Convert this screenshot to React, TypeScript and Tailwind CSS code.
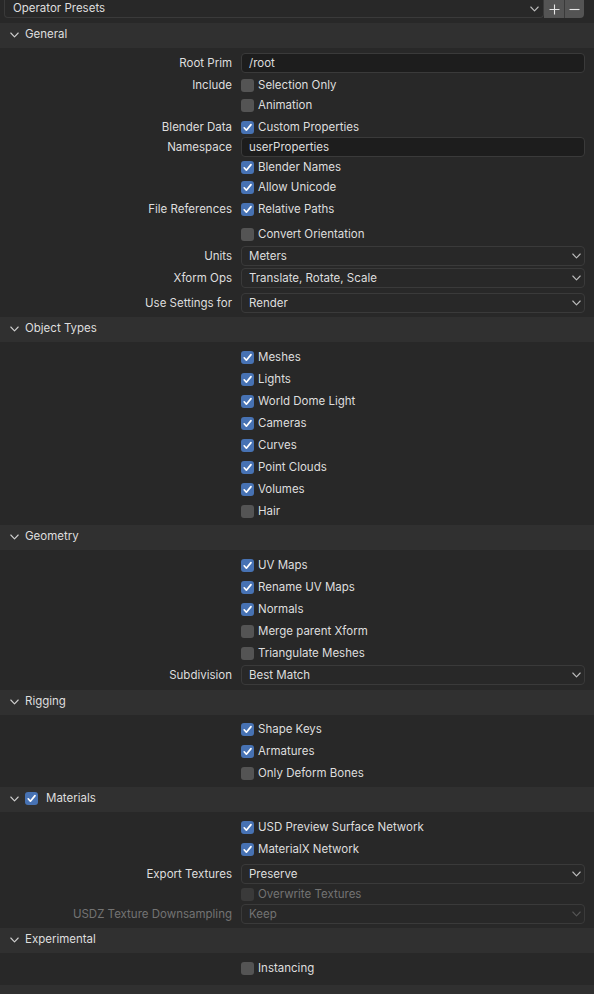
import React from "react";

const font = { fontFamily: "Inter, 'Noto Sans', sans-serif" };

function Check({ on = false, disabled = false }: { on?: boolean; disabled?: boolean }) {
  const bg = on ? "bg-[#4772b3]" : disabled ? "bg-[#3a3a3a]" : "bg-[#545454]";
  return (
    <div className={`w-[13px] h-[13px] rounded-[3px] shrink-0 flex items-center justify-center ${bg}`}>
      {on && (
        <svg width="13" height="13" viewBox="0 0 13 13">
          <polyline points="3.2,6.8 5.4,9.2 10,3.6" fill="none" stroke="white" strokeWidth="1.7" strokeLinecap="round" strokeLinejoin="round" />
        </svg>
      )}
    </div>
  );
}

function Chevron({ className = "" }: { className?: string }) {
  return (
    <svg width="9" height="6" viewBox="0 0 9 6" className={className}>
      <polyline points="0.8,1 4.5,4.8 8.2,1" fill="none" stroke="currentColor" strokeWidth="1.1" strokeLinecap="round" strokeLinejoin="round" />
    </svg>
  );
}

function Header({ title, check }: { title: string; check?: boolean }) {
  return (
    <div className="h-[25px] bg-[#303030] flex items-center pb-[2px] text-[#dedede] text-[11.5px]">
      <Chevron className="ml-[10px] text-[#cfcfcf]" />
      {check ? (
        <>
          <div className="ml-[6px]">
            <Check on />
          </div>
          <span className="ml-[8px] pt-px">{title}</span>
        </>
      ) : (
        <span className="ml-[6px] pt-px">{title}</span>
      )}
    </div>
  );
}

function Row({ label, disabled, mt = "", children }: { label?: string; disabled?: boolean; mt?: string; children: React.ReactNode }) {
  return (
    <div className={`h-[20px] flex items-center text-[11.5px] ${mt}`}>
      <div className={`w-[232px] text-right pt-px ${disabled ? "text-[#737373]" : "text-[#dedede]"}`}>{label}</div>
      <div className="ml-[9px] w-[344px] h-full flex items-center">{children}</div>
    </div>
  );
}

function Toggle({ text, on, disabled }: { text: string; on?: boolean; disabled?: boolean }) {
  return (
    <div className="flex items-center">
      <Check on={on} disabled={disabled} />
      <span className={`ml-[4px] pt-px ${disabled ? "text-[#737373]" : "text-[#dedede]"}`}>{text}</span>
    </div>
  );
}

function TextField({ value }: { value: string }) {
  return (
    <div className="w-full h-[20px] rounded-[4px] bg-[#1d1d1d] border border-[#3a3a3a] flex items-center px-[7px] pt-px text-[#dedede]">
      {value}
    </div>
  );
}

function Select({ value, disabled }: { value: string; disabled?: boolean }) {
  return (
    <div className={`w-full h-[20px] rounded-[4px] bg-[#282828] border border-[#3a3a3a] flex items-center pl-[7px] pr-[3px] ${disabled ? "text-[#737373]" : "text-[#dedede]"}`}>
      <span className="flex-1 pt-px">{value}</span>
      <Chevron className={disabled ? "text-[#555555]" : "text-[#bdbdbd]"} />
    </div>
  );
}

export default function App() {
  return (
    <div className="w-[594px] h-[994px] bg-[#282828] overflow-hidden" style={font}>
      {/* Presets bar */}
      <div className="h-[18px] flex pl-[4px] pr-[10px]">
        <div className="flex-1 h-full rounded-b-[4px] bg-[#282828] border border-t-0 border-[#3a3a3a] flex items-center pl-[8px] pr-[4px] text-[11.5px] text-[#dedede]">
          <span className="flex-1 pt-px">Operator Presets</span>
          <Chevron className="text-[#bdbdbd]" />
        </div>
        <div className="w-[20px] h-full bg-[#545454] flex items-center justify-center text-[#e6e6e6]">
          <svg width="11" height="11" viewBox="0 0 11 11">
            <path d="M5.5 0.5V10.5M0.5 5.5H10.5" stroke="currentColor" strokeWidth="1.1" />
          </svg>
        </div>
        <div className="w-px h-full bg-[#3a3a3a]" />
        <div className="w-[19px] h-full bg-[#545454] rounded-br-[4px] flex items-center justify-center text-[#e6e6e6]">
          <svg width="11" height="11" viewBox="0 0 11 11">
            <path d="M0.5 5.5H10.5" stroke="currentColor" strokeWidth="1.1" />
          </svg>
        </div>
      </div>

      <div className="h-[5px]" />

      <Header title="General" />
      <div className="pt-[5px] pb-[4px]">
        <Row label="Root Prim"><TextField value="/root" /></Row>
        <Row label="Include" mt="mt-[2px]"><Toggle text="Selection Only" /></Row>
        <Row><Toggle text="Animation" /></Row>
        <Row label="Blender Data" mt="mt-[2px]"><Toggle text="Custom Properties" on /></Row>
        <Row label="Namespace"><TextField value="userProperties" /></Row>
        <Row><Toggle text="Blender Names" on /></Row>
        <Row><Toggle text="Allow Unicode" on /></Row>
        <Row label="File References" mt="mt-[2px]"><Toggle text="Relative Paths" on /></Row>
        <Row mt="mt-[5px]"><Toggle text="Convert Orientation" /></Row>
        <Row label="Units" mt="mt-[2px]"><Select value="Meters" /></Row>
        <Row label="Xform Ops" mt="mt-[2px]"><Select value="Translate, Rotate, Scale" /></Row>
        <Row label="Use Settings for" mt="mt-[5px]"><Select value="Render" /></Row>
      </div>

      <Header title="Object Types" />
      <div className="pt-[5px] pb-[4px] flex flex-col gap-[2px]">
        <Row><Toggle text="Meshes" on /></Row>
        <Row><Toggle text="Lights" on /></Row>
        <Row><Toggle text="World Dome Light" on /></Row>
        <Row><Toggle text="Cameras" on /></Row>
        <Row><Toggle text="Curves" on /></Row>
        <Row><Toggle text="Point Clouds" on /></Row>
        <Row><Toggle text="Volumes" on /></Row>
        <Row><Toggle text="Hair" /></Row>
      </div>

      <Header title="Geometry" />
      <div className="pt-[5px] pb-[5px] flex flex-col gap-[2px]">
        <Row><Toggle text="UV Maps" on /></Row>
        <Row><Toggle text="Rename UV Maps" on /></Row>
        <Row><Toggle text="Normals" on /></Row>
        <Row><Toggle text="Merge parent Xform" /></Row>
        <Row><Toggle text="Triangulate Meshes" /></Row>
        <Row label="Subdivision"><Select value="Best Match" /></Row>
      </div>

      <Header title="Rigging" />
      <div className="pt-[4px] pb-[4px] flex flex-col gap-[2px]">
        <Row><Toggle text="Shape Keys" on /></Row>
        <Row><Toggle text="Armatures" on /></Row>
        <Row><Toggle text="Only Deform Bones" /></Row>
      </div>

      <Header title="Materials" check />
      <div className="pt-[5px] pb-[4px]">
        <Row><Toggle text="USD Preview Surface Network" on /></Row>
        <Row mt="mt-[2px]"><Toggle text="MaterialX Network" on /></Row>
        <Row label="Export Textures" mt="mt-[5px]"><Select value="Preserve" /></Row>
        <Row><Toggle text="Overwrite Textures" disabled /></Row>
        <Row label="USDZ Texture Downsampling" disabled><Select value="Keep" disabled /></Row>
      </div>

      <Header title="Experimental" />
      <div className="pt-[5px] pb-[7px]">
        <Row><Toggle text="Instancing" /></Row>
      </div>

      <div className="h-[25px] bg-[#303030]" />
    </div>
  );
}
